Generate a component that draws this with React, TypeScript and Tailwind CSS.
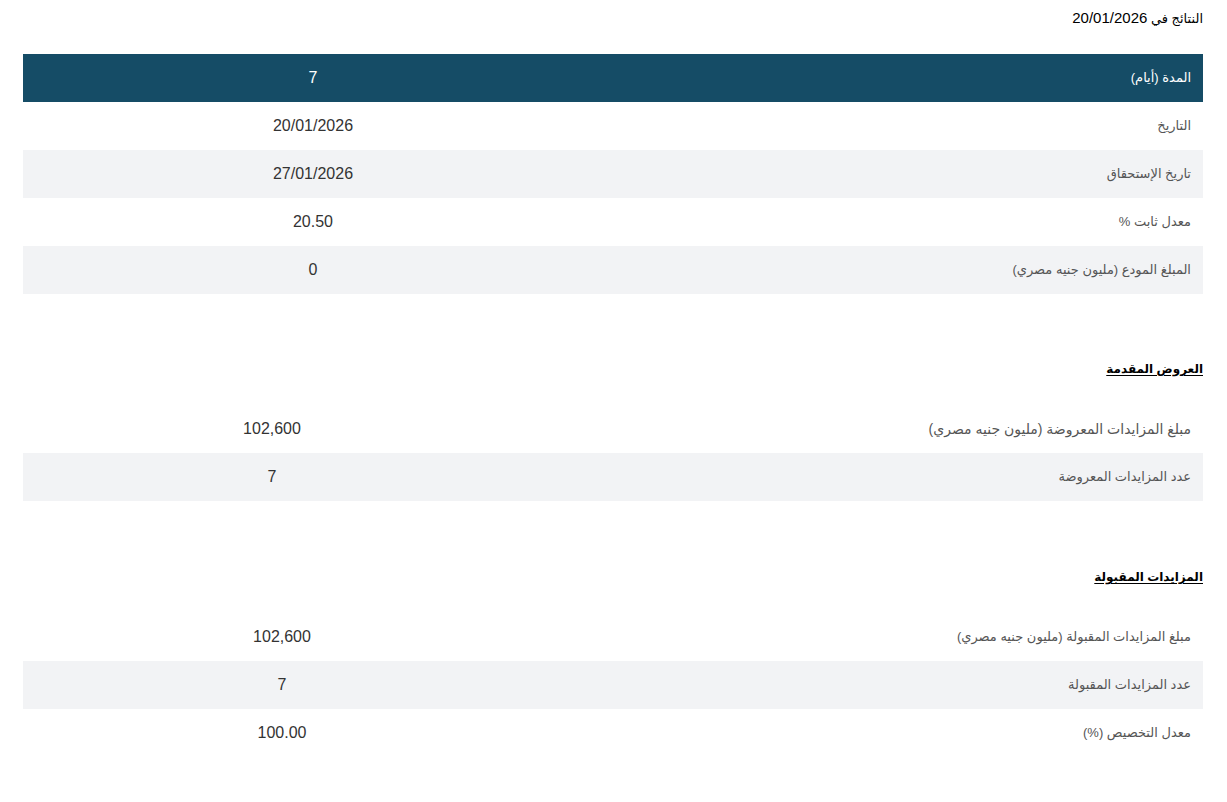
import React from "react";

type Row = { label: string; value: string; labelClass?: string };

function DataTable({
  rows,
  valueWidth,
  header,
}: {
  rows: Row[];
  valueWidth: string;
  header?: boolean;
}) {
  return (
    <div className="flex flex-col w-full">
      {rows.map((r, i) => {
        const isHeader = header && i === 0;
        const striped = header ? i % 2 === 0 : i % 2 === 1;
        return (
          <div
            key={i}
            className={`flex flex-row h-[48px] items-center ${
              isHeader ? "bg-[#154c66]" : striped ? "bg-[#f2f3f5]" : "bg-white"
            }`}
          >
            <div
              className={`flex-1 text-right pr-[12px] ${r.labelClass ?? "text-[13px]"} ${
                isHeader ? "text-white" : "text-[#555]"
              }`}
            >
              {r.label}
            </div>
            <div
              className={`${valueWidth} text-center text-[16px] ${
                isHeader ? "text-white" : "text-[#333]"
              }`}
              dir="ltr"
            >
              {r.value}
            </div>
          </div>
        );
      })}
    </div>
  );
}

export default function App() {
  return (
    <div
      dir="rtl"
      className="bg-white min-h-[802px] pl-[23px] pr-[24px] pt-[8px]"
      style={{ fontFamily: '"Liberation Sans", "DejaVu Sans", sans-serif' }}
    >
      <div className="text-[13px] text-black h-[20px] leading-[20px]">
        النتائج في <span className="text-[15px]">20/01/2026</span>
      </div>
      <div className="h-[26px]" />
      <DataTable
        header
        valueWidth="w-[580px]"
        rows={[
          { label: "المدة (أيام)", value: "7" },
          { label: "التاريخ", value: "20/01/2026" },
          { label: "تاريخ الإستحقاق", value: "27/01/2026" },
          { label: "معدل ثابت %", value: "20.50" },
          { label: "المبلغ المودع (مليون جنيه مصري)", value: "0" },
        ]}
      />
      <div className="h-[67px]" />
      <div className="text-[12px] font-bold underline underline-offset-2 text-black h-[16px] leading-[16px]">
        العروض المقدمة
      </div>
      <div className="h-[28px]" />
      <DataTable
        valueWidth="w-[498px]"
        rows={[
          {
            label: "مبلغ المزايدات المعروضة (مليون جنيه مصري)",
            value: "102,600",
            labelClass: "text-[14px]",
          },
          { label: "عدد المزايدات المعروضة", value: "7" },
        ]}
      />
      <div className="h-[68px]" />
      <div className="text-[12px] font-bold underline underline-offset-2 text-black h-[16px] leading-[16px]">
        المزايدات المقبولة
      </div>
      <div className="h-[28px]" />
      <DataTable
        valueWidth="w-[518px]"
        rows={[
          { label: "مبلغ المزايدات المقبولة (مليون جنيه مصري)", value: "102,600" },
          { label: "عدد المزايدات المقبولة", value: "7" },
          { label: "معدل التخصيص (%)", value: "100.00" },
        ]}
      />
    </div>
  );
}
